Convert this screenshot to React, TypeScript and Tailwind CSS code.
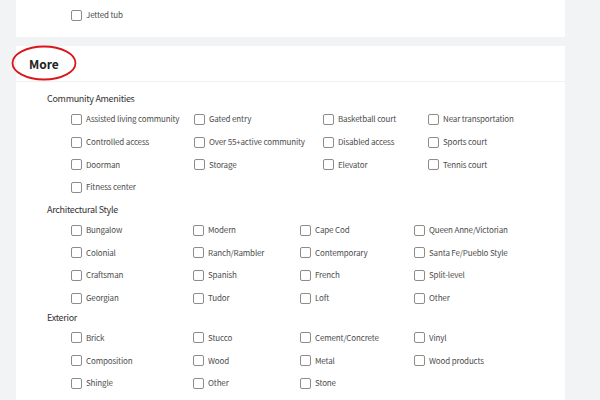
import React from "react";

const font = { fontFamily: '"Noto Sans CJK SC", "Noto Sans", Arial, sans-serif' };

function Item({ label }: { label: string }) {
  return (
    <div className="flex items-center h-[22.7px]">
      <span className="w-[11px] h-[11px] border border-[#8c8c8c] rounded-[2px] bg-white shrink-0" />
      <span className="ml-[4px] text-[8px] tracking-[-0.15px] text-[#4d4d4d] whitespace-nowrap leading-none">{label}</span>
    </div>
  );
}

function Section({
  title,
  cols,
  items,
  className,
}: {
  title: string;
  cols: string;
  items: string[];
  className?: string;
}) {
  return (
    <div className={className}>
      <div className="h-[18px] flex items-center pl-[31px] text-[9px] tracking-[-0.3px] text-[#333]">{title}</div>
      <div className={`grid pl-[55px] ${cols}`}>
        {items.map((it, i) => (
          <Item key={i} label={it} />
        ))}
      </div>
    </div>
  );
}

export default function App() {
  return (
    <div className="w-[600px] h-[400px] overflow-hidden bg-[#f2f3f5] pl-[16px]" style={font}>
      <div className="w-[549px] h-[37px] bg-white pl-[55px] pt-[4px]">
        <Item label="Jetted tub" />
      </div>
      <div className="w-[549px] h-[400px] bg-white mt-[9px] relative">
        <div className="h-[36px] border-b border-[#f0f0f0] flex items-center pl-[13px]">
          <span className="text-[12px] font-bold text-[#222]">More</span>
        </div>
        <svg className="absolute left-[-5px] top-[-2px]" width="68" height="38" viewBox="0 0 68 38">
          <ellipse cx="33" cy="19" rx="31.5" ry="16.5" fill="none" stroke="#d9161b" strokeWidth="1.8" />
        </svg>
        <div className="pt-[8px] flex flex-col">
          <Section
            title="Community Amenities"
            cols="grid-cols-[123px_129px_105px_1fr]"
            items={[
              "Assisted living community",
              "Gated entry",
              "Basketball court",
              "Near transportation",
              "Controlled access",
              "Over 55+active community",
              "Disabled access",
              "Sports court",
              "Doorman",
              "Storage",
              "Elevator",
              "Tennis court",
              "Fitness center",
            ]}
          />
          <Section
            className="mt-[2px]"
            title="Architectural Style"
            cols="grid-cols-[122px_107px_114px_1fr]"
            items={[
              "Bungalow",
              "Modern",
              "Cape Cod",
              "Queen Anne/Victorian",
              "Colonial",
              "Ranch/Rambler",
              "Contemporary",
              "Santa Fe/Pueblo Style",
              "Craftsman",
              "Spanish",
              "French",
              "Split-level",
              "Georgian",
              "Tudor",
              "Loft",
              "Other",
            ]}
          />
          <Section
            className="-mt-[1px]"
            title="Exterior"
            cols="grid-cols-[122px_107px_114px_1fr]"
            items={[
              "Brick",
              "Stucco",
              "Cement/Concrete",
              "Vinyl",
              "Composition",
              "Wood",
              "Metal",
              "Wood products",
              "Shingle",
              "Other",
              "Stone",
            ]}
          />
        </div>
      </div>
    </div>
  );
}
